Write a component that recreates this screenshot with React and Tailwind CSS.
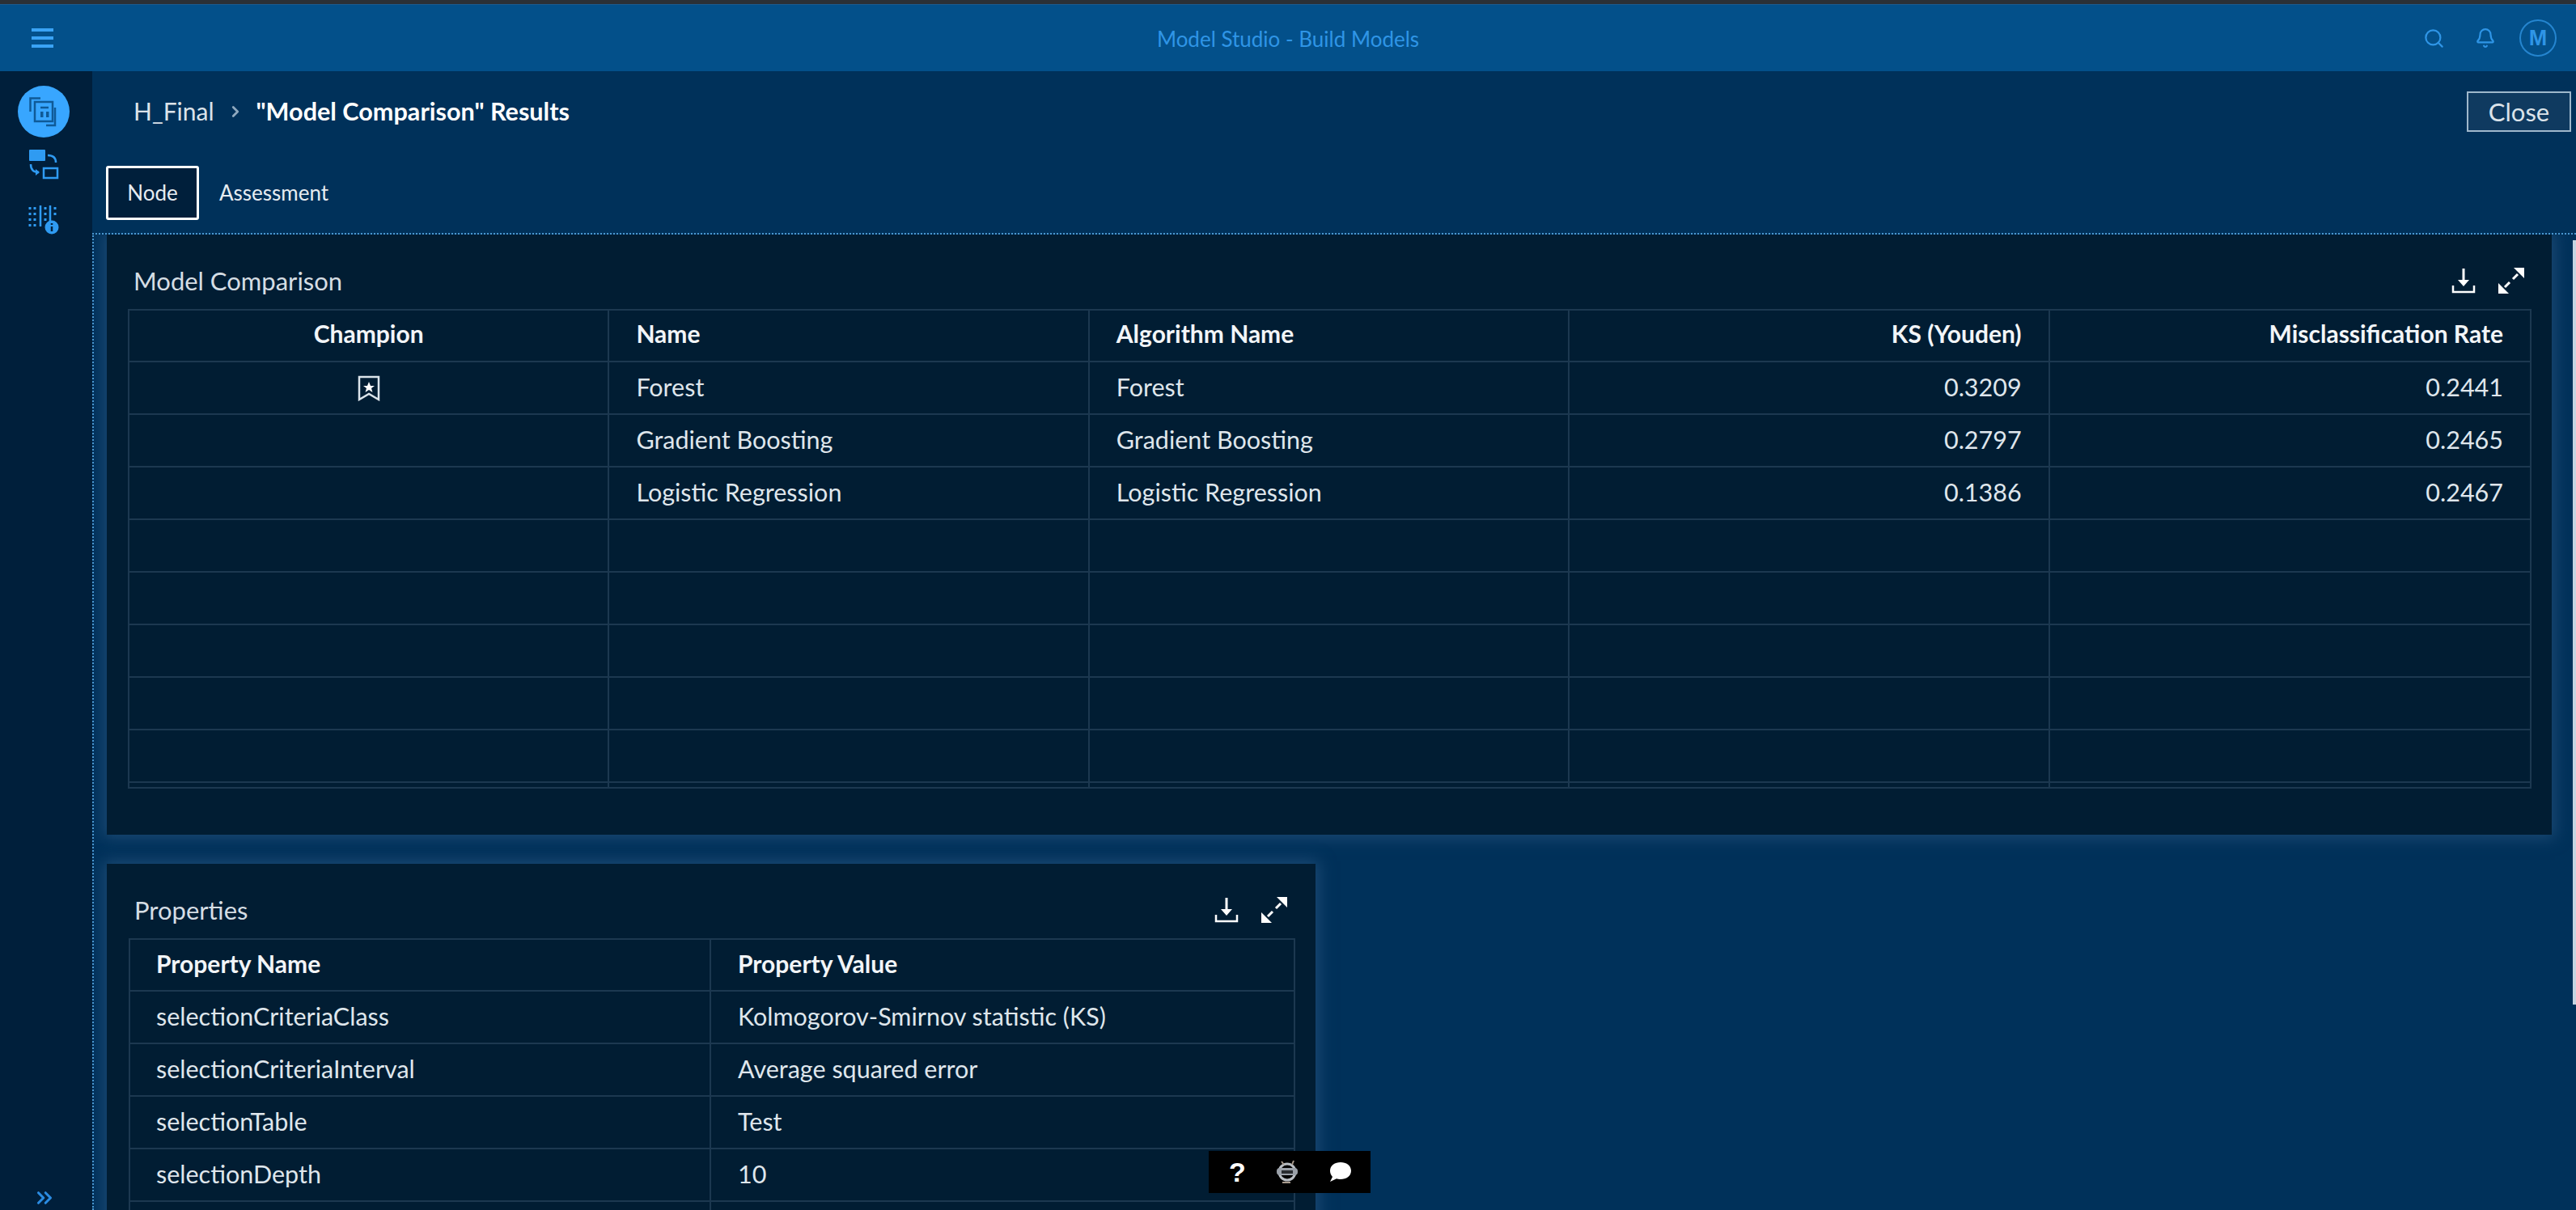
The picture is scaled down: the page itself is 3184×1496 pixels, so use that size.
import React from 'react';
import { Search, Bell, ChevronRight, ChevronsRight } from 'lucide-react';

const comparisonRows = [
    { champion: true, name: 'Forest', algorithm: 'Forest', ks: '0.3209', misclass: '0.2441' },
    { name: 'Gradient Boosting', algorithm: 'Gradient Boosting', ks: '0.2797', misclass: '0.2465' },
    { name: 'Logistic Regression', algorithm: 'Logistic Regression', ks: '0.1386', misclass: '0.2467' },
    {}, {}, {}, {}, {}, {},
];

const propertyRows = [
    ['selectionCriteriaClass', 'Kolmogorov-Smirnov statistic (KS)'],
    ['selectionCriteriaInterval', 'Average squared error'],
    ['selectionTable', 'Test'],
    ['selectionDepth', '10'],
    ['', ''],
];

const DownloadIcon = () => (
    <svg width="30" height="32" viewBox="0 0 30 32" fill="none" className="text-white">
        <path d="M15 1v18" stroke="currentColor" strokeWidth="3" />
        <path d="M8 15h14l-7 8z" fill="currentColor" />
        <path d="M2 22v8h26v-8" stroke="currentColor" strokeWidth="2.5" />
    </svg>
);

const ExpandIcon = () => (
    <svg width="34" height="32" viewBox="0 0 34 32" fill="none" className="text-white">
        <path d="M33 0v13l-13-13z" fill="currentColor" />
        <path d="M1 32v-13l13 13z" fill="currentColor" />
        <path d="M25 8l-6 6M15 18l-6 6" stroke="currentColor" strokeWidth="3" />
    </svg>
);

const ChampionIcon = () => (
    <svg width="28" height="32" viewBox="0 0 28 32" fill="none">
        <path d="M2 2h24v28l-12-7-12 7z" stroke="#dbe4ea" strokeWidth="2.5" />
        <path d="M14 8l2 5h5l-4 3 1.500 5-4.500-3-4.500 3 1.500-5-4-3h5z" fill="#ffffff" />
    </svg>
);

const ResultsIcon = () => (
    <svg width="40" height="40" viewBox="0 0 40 40" fill="none" stroke="#0f5a97" strokeWidth="2.5">
        <path d="M3.500 20V3.500H16" />
        <rect x="9" y="8" width="22" height="24" />
        <path d="M34 15v22H23" />
        <path d="M16 15h10" />
        <rect x="16" y="20" width="3.500" height="7" fill="#0f5a97" stroke="none" />
        <rect x="23" y="20" width="3.500" height="7" fill="#0f5a97" stroke="none" />
    </svg>
);

const CompareIcon = () => (
    <svg width="38" height="38" viewBox="0 0 38 38" fill="none">
        <rect x="1" y="1" width="20" height="14" rx="1" fill="#2f9bf2" />
        <path d="M24 8c6 0 10 3 10 9" stroke="#2f9bf2" strokeWidth="2.5" />
        <path d="M3 19c0 7 4 10 10 10" stroke="#2f9bf2" strokeWidth="2.5" />
        <path d="M9 25l5 4-5 4z" fill="#2f9bf2" />
        <rect x="19" y="24" width="17" height="12" stroke="#2f9bf2" strokeWidth="2.5" />
    </svg>
);

const VariableIcon = () => (
    <svg width="38" height="36" viewBox="0 0 38 36" fill="none">
        <path d="M15 0v26M27 0v22" stroke="#2f9bf2" strokeWidth="2.500" />
        <path d="M2 2v3M2 9v3M2 16v3M2 23v3M8 2v3M8 9v3M8 16v3M8 23v3M21 2v3M21 9v3M21 16v3M33 2v3M33 9v3" stroke="#2f9bf2" strokeWidth="3" />
        <circle cx="29" cy="27" r="8.500" fill="#2f9bf2" />
        <path d="M29 22v2M29 26v6" stroke="#02223f" strokeWidth="2.500" />
    </svg>
);

const GremlinIcon = () => (
    <svg width="30" height="30" viewBox="0 0 30 30" fill="none">
        <circle cx="15" cy="15" r="10" stroke="#b9bec4" strokeWidth="3" />
        <rect x="2" y="10" width="26" height="9" rx="4" fill="#9aa0a8" />
        <rect x="8" y="13" width="14" height="4" fill="#2a2d31" />
        <path d="M8 2l3 4M23 1l-2 5M9 28h10" stroke="#a79a8c" strokeWidth="2" />
    </svg>
);

const BubbleIcon = () => (
    <svg width="28" height="26" viewBox="0 0 28 26">
        <path d="M14 1c7 0 13 4 13 10.500S21 22 14 22c-2 0-4-.3-5-.8L1 25l3-6C2 17 1 14 1 11.500 1 5 7 1 14 1z" fill="#ffffff" />
    </svg>
);

const Panel = ({ title, className, children }) => (
    <section className={`bg-[#011d33] shadow-[0_0_18px_4px_#1c4a74] ${className}`}>
        <div className="flex items-center justify-between pl-[7px] pr-[7px] pt-[22px] h-[92px]">
            <h2 className="text-[31px] text-[#d5dde4] font-normal">{title}</h2>
            <div className="flex items-center gap-[27px]">
                <DownloadIcon />
                <ExpandIcon />
            </div>
        </div>
        {children}
    </section>
);

const App = () => {
    return (
        <div className="relative w-[3184px] h-[1496px] overflow-hidden flex flex-col font-['Lato',sans-serif] bg-[#00315a] text-white">
            <div className="h-[5px] bg-[#2b3036] shrink-0"></div>

            <header className="h-[83px] shrink-0 grid grid-cols-[1fr_auto_1fr] items-center bg-[#03508a] border-t border-[#1d5a8c]">
                <div className="pl-[39px]">
                    <div className="w-[27px] flex flex-col gap-[6px]">
                        <span className="h-[4px] bg-[#3aa3f5]"></span>
                        <span className="h-[4px] bg-[#3aa3f5]"></span>
                        <span className="h-[4px] bg-[#3aa3f5]"></span>
                    </div>
                </div>
                <div className="text-[26px] text-[#2f95e6] pt-[2px]">Model Studio - Build Models</div>
                <div className="flex items-center justify-end gap-[37px] pr-[24px]">
                    <Search size={27} strokeWidth={2} color="#2f95e6" />
                    <Bell size={26} strokeWidth={2} color="#2f95e6" />
                    <div className="w-[46px] h-[46px] rounded-full border-2 border-[#2585cf] flex items-center justify-center text-[27px] font-bold text-[#2f95e6] -ml-[8px] font-['Liberation_Sans',sans-serif]">M</div>
                </div>
            </header>

            <div className="flex flex-1 min-h-0">
                <aside className="w-[114px] shrink-0 bg-[#001f3b] flex flex-col items-center pt-[18px] pr-[4px]">
                    <div className="w-[64px] h-[64px] rounded-full bg-[#38a6ff] flex items-center justify-center mr-[2px]">
                        <ResultsIcon />
                    </div>
                    <div className="mt-[14px] mr-[2px]"><CompareIcon /></div>
                    <div className="mt-[32px] mr-[2px]"><VariableIcon /></div>
                    <div className="mt-auto">
                        <ChevronsRight size={30} strokeWidth={2.5} color="#2a8be0" />
                    </div>
                </aside>

                <main className="flex-1 min-w-0 flex flex-col">
                    <div className="flex items-center justify-between pt-[25px] pl-[51px] pr-[6px]">
                        <div className="flex items-center text-[30px]">
                            <span className="text-[#dbe3ea]">H_Final</span>
                            <ChevronRight size={22} strokeWidth={3} color="#8fa9bf" className="mx-[15px]" />
                            <span className="font-bold text-[30.600px]">"Model Comparison" Results</span>
                        </div>
                        <button className="w-[129px] h-[50px] border-2 border-[#9fb8cc] bg-[#0f3a60] text-[31px] text-[#dbe3ea]">Close</button>
                    </div>

                    <div className="flex items-center mt-[42px] pl-[17px] text-[26px]">
                        <div className="w-[115px] h-[67px] border-[3px] border-white rounded-[3px] bg-[#001f3b] flex items-center justify-center text-[#e6ecf1]">Node</div>
                        <div className="ml-[25px] text-[#e6ecf1]">Assessment</div>
                    </div>

                    <div className="flex-1 mt-[16px] border-t-2 border-l-2 border-dotted border-[#4a97d0] pl-[16px] min-h-0 overflow-hidden">
                        <Panel title="Model Comparison" className="w-[3022px] h-[742px] px-[26px]">
                            <div className="w-[2971px] h-[593px] border-2 border-[#1c3850] overflow-hidden">
                                <div className="grid grid-cols-5 h-[64px] border-b-2 border-[#1c3850] font-bold text-[30px] text-[#f2f5f8]">
                                    <div className="flex items-center justify-center pb-[5px] border-r-2 border-[#1c3850]">Champion</div>
                                    <div className="flex items-center pl-[33px] pb-[5px] border-r-2 border-[#1c3850]">Name</div>
                                    <div className="flex items-center pl-[33px] pb-[5px] border-r-2 border-[#1c3850]">Algorithm Name</div>
                                    <div className="flex items-center justify-end pr-[33px] pb-[5px] border-r-2 border-[#1c3850]">KS (Youden)</div>
                                    <div className="flex items-center justify-end pr-[33px] pb-[5px]">Misclassification Rate</div>
                                </div>
                                {comparisonRows.map((row, i) => (
                                    <div key={i} className="grid grid-cols-5 h-[65px] border-b-2 border-[#1c3850] text-[30.500px] text-[#dfe6ec]">
                                        <div className="flex items-center justify-center border-r-2 border-[#1c3850]">{row.champion && <ChampionIcon />}</div>
                                        <div className="flex items-center pl-[33px] pb-[1px] border-r-2 border-[#1c3850]">{row.name}</div>
                                        <div className="flex items-center pl-[33px] pb-[1px] border-r-2 border-[#1c3850]">{row.algorithm}</div>
                                        <div className="flex items-center justify-end pr-[33px] pb-[1px] border-r-2 border-[#1c3850]">{row.ks}</div>
                                        <div className="flex items-center justify-end pr-[33px] pb-[1px]">{row.misclass}</div>
                                    </div>
                                ))}
                            </div>
                        </Panel>

                        <Panel title="Properties" className="w-[1494px] mt-[36px] px-[27px]">
                            <div className="w-[1442px] border-2 border-[#1c3850]">
                                <div className="grid grid-cols-[718px_1fr] h-[64px] border-b-2 border-[#1c3850] font-bold text-[30px] text-[#f2f5f8]">
                                    <div className="flex items-center pl-[32px] pb-[4px] border-r-2 border-[#1c3850]">Property Name</div>
                                    <div className="flex items-center pl-[33px] pb-[4px]">Property Value</div>
                                </div>
                                {propertyRows.map(([name, value], i) => (
                                    <div key={i} className="grid grid-cols-[718px_1fr] h-[65px] border-b-2 border-[#1c3850] text-[30.500px] text-[#dfe6ec]">
                                        <div className="flex items-center pl-[32px] pb-[1px] border-r-2 border-[#1c3850]">{name}</div>
                                        <div className="flex items-center pl-[33px] pb-[1px]">{value}</div>
                                    </div>
                                ))}
                            </div>
                        </Panel>
                    </div>
                </main>
            </div>

            {/* floating help bar and page scrollbar sit over the content */}
            <div className="absolute left-[1494px] top-[1423px] w-[200px] h-[52px] bg-black flex items-center justify-between pl-[25px] pr-[23px]">
                <span className="text-[34px] font-bold leading-none font-['Liberation_Sans',sans-serif]">?</span>
                <GremlinIcon />
                <BubbleIcon />
            </div>
            <div className="absolute right-0 top-[297px] w-[4px] h-[945px] bg-[#c5d5e2]"></div>
        </div>
    );
};

export default App;
